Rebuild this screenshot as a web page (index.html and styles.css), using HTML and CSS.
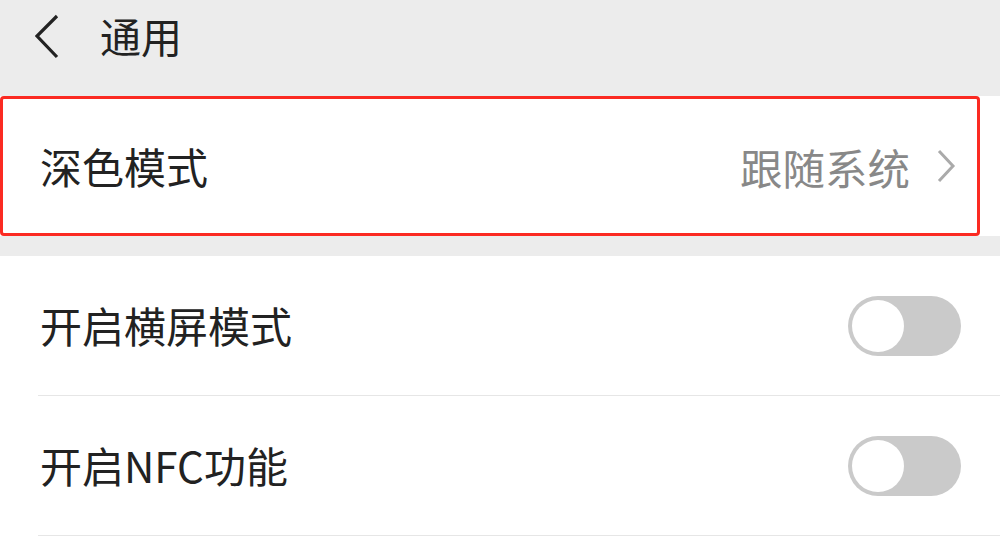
FILE: index.html
```html
<!DOCTYPE html>
<html>
<head>
    <meta charset="utf-8">
    <link rel="stylesheet" href="styles.css">
</head>
<body>
  <div class="topbar">
    <svg class="back" width="30" height="50" viewBox="0 0 30 50">
      <polyline points="22,14 2,34 22,55" transform="translate(0,-10)" />
    </svg>
    <span class="title">通用</span>
  </div>

  <div class="group">
    <div class="row">
      <span class="label">深色模式</span>
      <span class="value">跟随系统</span>
      <svg class="arrow" width="22" height="34" viewBox="0 0 22 34">
        <polyline points="3,2 17,17 3,32" />
      </svg>
    </div>
    <div class="mark"></div>
  </div>

  <div class="gap"></div>

  <div class="group">
    <div class="row line">
      <span class="label">开启横屏模式</span>
      <span class="switch"><span class="knob"></span></span>
    </div>
    <div class="row line">
      <span class="label">开启NFC功能</span>
      <span class="switch"><span class="knob"></span></span>
    </div>
  </div>
</body>
</html>
```

FILE: styles.css
```css
body {
  margin: 0;
  background: #fff;
  font-family: "Noto Sans CJK SC", "Noto Sans", sans-serif;
  color: #222;
}
.topbar {
  height: 96px;
  background: #ececec;
  display: flex;
  align-items: center;
  padding-left: 35px;
  box-sizing: border-box;
}
.back {
  margin-top: -22px;
}
.back polyline {
  fill: none;
  stroke: #222;
  stroke-width: 3.2;
}
.title {
  font-size: 41px;
  margin-left: 35px;
  margin-top: -27px;
}
.group {
  position: relative;
  background: #fff;
}
.row {
  height: 140px;
  display: flex;
  align-items: center;
  padding: 0 40px 0 40px;
  box-sizing: border-box;
}
.line {
  margin-left: 38px;
  padding-left: 2px;
  border-bottom: 1px solid #e6e6e6;
}
.label {
  font-size: 42px;
  flex: 1;
  margin-top: -2px;
}
.value {
  font-size: 42.5px;
  color: #888;
  margin-right: 26px;
}
.arrow {
  margin-right: 2px;
}
.arrow polyline {
  fill: none;
  stroke: #aaa;
  stroke-width: 3;
}
.mark {
  position: absolute;
  left: 0;
  top: 0;
  width: 980px;
  height: 140px;
  box-sizing: border-box;
  border: 3px solid #fb2a22;
  border-radius: 4px;
}
.gap {
  height: 20px;
  background: #ececec;
}
.switch {
  width: 113px;
  height: 60px;
  border-radius: 30px;
  background: #cacaca;
  box-sizing: border-box;
  padding: 4px;
  margin-right: -1px;
}
.knob {
  display: block;
  width: 52px;
  height: 52px;
  border-radius: 50%;
  background: #fff;
}
```
